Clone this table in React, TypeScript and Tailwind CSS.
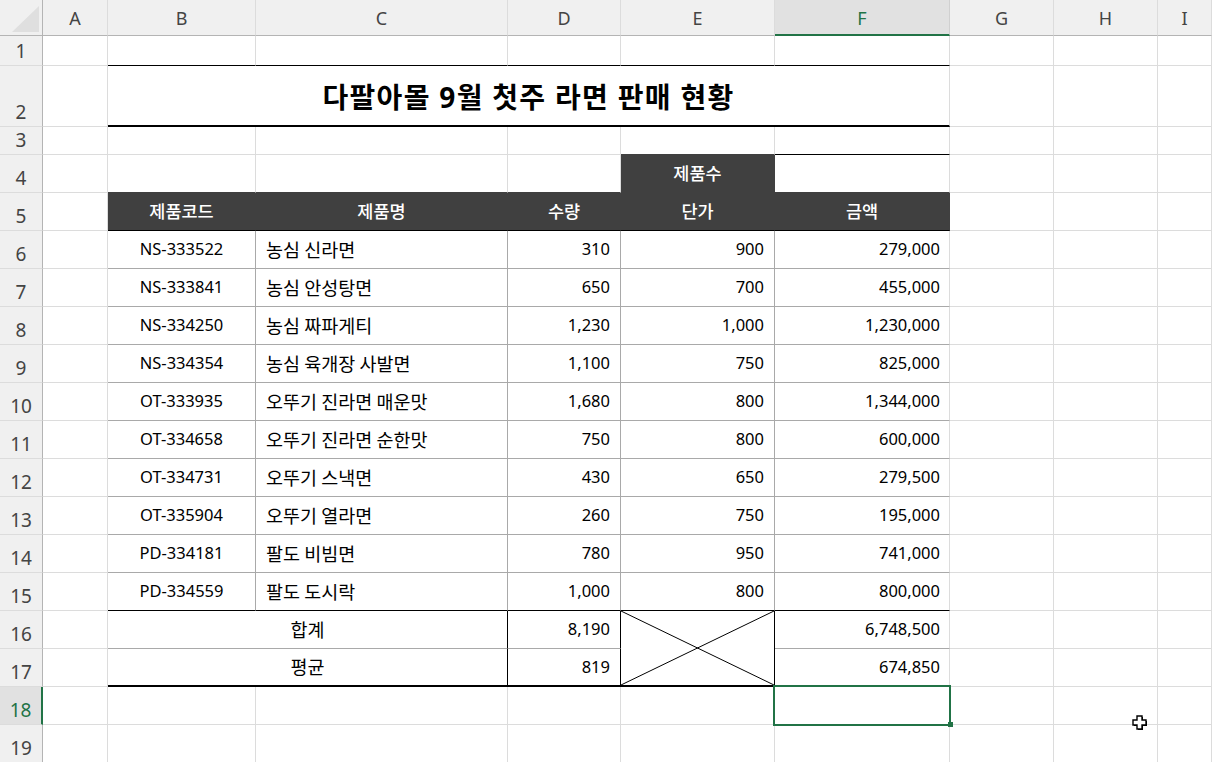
import React from 'react';

type Item = { code: string; name: string; qty: string; price: string; amount: string };

const items: Item[] = [
  { code: 'NS-333522', name: '농심 신라면', qty: '310', price: '900', amount: '279,000' },
  { code: 'NS-333841', name: '농심 안성탕면', qty: '650', price: '700', amount: '455,000' },
  { code: 'NS-334250', name: '농심 짜파게티', qty: '1,230', price: '1,000', amount: '1,230,000' },
  { code: 'NS-334354', name: '농심 육개장 사발면', qty: '1,100', price: '750', amount: '825,000' },
  { code: 'OT-333935', name: '오뚜기 진라면 매운맛', qty: '1,680', price: '800', amount: '1,344,000' },
  { code: 'OT-334658', name: '오뚜기 진라면 순한맛', qty: '750', price: '800', amount: '600,000' },
  { code: 'OT-334731', name: '오뚜기 스낵면', qty: '430', price: '650', amount: '279,500' },
  { code: 'OT-335904', name: '오뚜기 열라면', qty: '260', price: '750', amount: '195,000' },
  { code: 'PD-334181', name: '팔도 비빔면', qty: '780', price: '950', amount: '741,000' },
  { code: 'PD-334559', name: '팔도 도시락', qty: '1,000', price: '800', amount: '800,000' },
];

const columns = ['A', 'B', 'C', 'D', 'E', 'F', 'G', 'H', 'I'];

// right / bottom border presets
const R = {
  grid: 'border-r border-r-[#dcdcdc]',
  gray: 'border-r border-r-[#a9a9a9]',
  black: 'border-r border-r-black',
  dark: 'border-r border-r-[#404040]',
};
const B = {
  grid: 'border-b border-b-[#dcdcdc]',
  gray: 'border-b border-b-[#a9a9a9]',
  black: 'border-b border-b-black',
  thick: 'border-b-2 border-b-black',
  dark: 'border-b border-b-[#404040]',
};

// hangul runs render a bit larger so they take the width they have in the sheet
const K = ({ text }: { text: string }) => (
  <span className="whitespace-pre">
    {text.split(/([\uAC00-\uD7A3]+)/).map((part, i) =>
      /[\uAC00-\uD7A3]/.test(part) ? (
        <span key={i} className="text-[1.12em]">
          {part}
        </span>
      ) : (
        part
      )
    )}
  </span>
);

const Cell = ({ className = '', children }: { className?: string; children?: React.ReactNode }) => (
  <div className={`flex min-w-0 items-center overflow-hidden whitespace-nowrap ${className}`}>{children}</div>
);

const RowHead = ({ n, active = false }: { n: number; active?: boolean }) => (
  <div
    className={`flex items-end justify-center pb-[4px] text-[19px] leading-[19px] border-b border-b-[#dcdcdc] ${
      active
        ? 'bg-[#e1e1e1] text-[#217346] border-r-2 border-r-[#217346]'
        : 'bg-[#f0f0f0] text-[#444444] border-r border-r-[#b4b4b4]'
    }`}
  >
    {n}
  </div>
);

const Blank = ({ n }: { n: number }) => (
  <>
    {Array.from({ length: n }).map((_, i) => (
      <Cell key={i} className={`${R.grid} ${B.grid}`} />
    ))}
  </>
);

const Tail = () => <Blank n={3} />;

const App: React.FC = () => {
  return (
    <div className="relative h-[762px] w-[1212px] overflow-hidden bg-white text-black font-['Noto_Sans','Noto_Sans_CJK_KR',sans-serif]">
      <div className="grid grid-cols-[43px_65px_148px_252px_113px_154px_175px_104px_104px_1fr] grid-rows-[36px_30px_61px_28px_repeat(16,38px)] text-[16.5px]">
        {/* column headers */}
        <div className="relative bg-[#f0f0f0] border-r border-r-[#b4b4b4] border-b border-b-[#b4b4b4]">
          <svg className="absolute left-[12px] top-[6px]" width="28" height="26" viewBox="0 0 28 26">
            <polygon points="0,26 27,26 27,0" fill="#dfdfdf" />
          </svg>
        </div>
        {columns.map((c) =>
          c === 'F' ? (
            <div
              key={c}
              className="flex items-center justify-center pt-[2px] text-[18px] bg-[#e1e1e1] text-[#217346] border-r border-r-[#d0d0d0] border-b-2 border-b-[#217346]"
            >
              {c}
            </div>
          ) : (
            <div
              key={c}
              className="flex items-center justify-center pt-[2px] text-[18px] bg-[#f0f0f0] text-[#444444] border-r border-r-[#dcdcdc] border-b border-b-[#b4b4b4]"
            >
              {c}
            </div>
          )
        )}

        {/* row 1 */}
        <RowHead n={1} />
        <Blank n={1} />
        {[0, 1, 2, 3, 4].map((i) => (
          <Cell key={i} className={`${R.grid} ${B.black}`} />
        ))}
        <Tail />

        {/* row 2: title */}
        <RowHead n={2} />
        <Blank n={1} />
        <Cell className={`col-span-5 justify-center pt-[2px] text-[28px] tracking-[1.3px] font-bold ${R.grid} border-b-2 border-b-black`}>
          다팔아몰 9월 첫주 라면 판매 현황
        </Cell>
        <Tail />

        {/* row 3 */}
        <RowHead n={3} />
        <Blank n={4} />
        <Cell className={`${R.grid} ${B.dark}`} />
        <Cell className={`${R.grid} ${B.black}`} />
        <Tail />

        {/* row 4 */}
        <RowHead n={4} />
        <Blank n={1} />
        <Cell className={`${R.grid} ${B.dark}`} />
        <Cell className={`${R.grid} ${B.dark}`} />
        <Cell className={`${R.grid} ${B.dark}`} />
        <Cell className={`justify-center bg-[#404040] text-[17.5px] font-medium text-white ${R.dark} ${B.dark}`}>제품수</Cell>
        <Cell className={`${R.grid} ${B.dark}`} />
        <Tail />

        {/* row 5 */}
        <RowHead n={5} />
        <Blank n={1} />
        {['제품코드', '제품명', '수량', '단가', '금액'].map((h) => (
          <Cell key={h} className={`justify-center bg-[#404040] text-[17.5px] font-medium text-white ${R.dark} ${B.black}`}>
            {h}
          </Cell>
        ))}
        <Tail />

        {/* rows 6-15 */}
        {items.map((it, i) => {
          const bottom = i === items.length - 1 ? B.black : B.gray;
          return (
            <React.Fragment key={it.code}>
              <RowHead n={6 + i} />
              <Blank n={1} />
              <Cell className={`justify-center ${R.gray} ${bottom}`}>{it.code}</Cell>
              <Cell className={`pl-[10px] ${R.gray} ${bottom}`}>
                <K text={it.name} />
              </Cell>
              <Cell className={`justify-end pr-[10px] ${R.gray} ${bottom}`}>{it.qty}</Cell>
              <Cell className={`justify-end pr-[10px] ${R.gray} ${bottom}`}>{it.price}</Cell>
              <Cell className={`justify-end pr-[9px] ${R.grid} ${bottom}`}>{it.amount}</Cell>
              <Tail />
            </React.Fragment>
          );
        })}

        {/* row 16 */}
        <RowHead n={16} />
        <Blank n={1} />
        <Cell className={`col-span-2 justify-center ${R.black} ${B.gray}`}>
          <K text="합계" />
        </Cell>
        <Cell className={`justify-end pr-[10px] ${R.black} ${B.gray}`}>8,190</Cell>
        <div className={`relative row-span-2 ${R.black} ${B.thick}`}>
          <svg className="absolute inset-0 h-full w-full" viewBox="0 0 100 100" preserveAspectRatio="none">
            <line x1="0" y1="0" x2="100" y2="100" stroke="black" strokeWidth="1" vectorEffect="non-scaling-stroke" />
            <line x1="0" y1="100" x2="100" y2="0" stroke="black" strokeWidth="1" vectorEffect="non-scaling-stroke" />
          </svg>
        </div>
        <Cell className={`justify-end pr-[9px] ${R.grid} ${B.gray}`}>6,748,500</Cell>
        <Tail />

        {/* row 17 */}
        <RowHead n={17} />
        <Blank n={1} />
        <Cell className={`col-span-2 justify-center ${R.black} ${B.thick}`}>
          <K text="평균" />
        </Cell>
        <Cell className={`justify-end pr-[10px] ${R.black} ${B.thick}`}>819</Cell>
        <Cell className={`justify-end pr-[9px] ${R.grid} ${B.thick}`}>674,850</Cell>
        <Tail />

        {/* row 18 */}
        <RowHead n={18} active />
        <Blank n={5} />
        <div className={`relative ${R.grid} ${B.grid}`}>
          <div className="absolute -inset-[2px] border-2 border-[#217346]">
            <div className="absolute -right-[4px] -bottom-[3px] h-[5px] w-[5px] bg-[#217346]" />
          </div>
        </div>
        <Tail />

        {/* row 19 */}
        <RowHead n={19} />
        <Blank n={6} />
        <Tail />
      </div>

      {/* mouse cursor */}
      <svg className="absolute left-[1131px] top-[714px]" width="18" height="18" viewBox="0 0 18 18">
        <polygon points="6,2 11,2 11,6 15,6 15,11 11,11 11,15 6,15 6,11 2,11 2,6 6,6" fill="black" transform="translate(1,1)" />
        <polygon points="6,2 11,2 11,6 15,6 15,11 11,11 11,15 6,15 6,11 2,11 2,6 6,6" fill="white" stroke="black" strokeWidth="1.4" />
      </svg>
    </div>
  );
};

export default App;
